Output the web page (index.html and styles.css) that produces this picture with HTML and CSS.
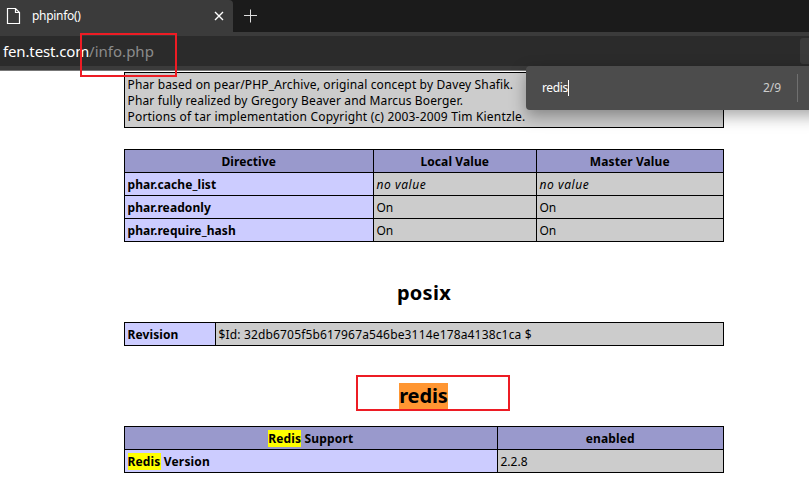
FILE: index.html
```
<!DOCTYPE html>
<html lang="en">
<head>
<meta charset="utf-8">
<title>phpinfo()</title>
<link rel="stylesheet" href="styles.css">
</head>
<body>
<header class="browser">
  <div class="tabs">
    <div class="tab">
      <svg class="page-icon" width="15" height="18" viewBox="0 0 15 18"><path d="M1.5 1.5H9.5L13.5 5.5V16.5H1.5Z M9.5 1.5V5.5H13.5"/></svg>
      <span class="tab-title">phpinfo()</span>
      <svg class="close" width="10" height="10" viewBox="0 0 10 10"><path d="M1 1L9 9M9 1L1 9"/></svg>
    </div>
    <div class="tab-rest"><svg width="14" height="14" viewBox="0 0 14 14"><path d="M6.5 .5V13.5M0 6.5H13"/></svg></div>
  </div>
  <div class="address"><span class="url"><span class="host">fen.test.com</span><span class="path">/info.php</span></span><span class="address-button"></span></div>
</header>
<main>
  <section class="box">
    <div>Phar based on pear/PHP_Archive, original concept by Davey Shafik.</div>
    <div>Phar fully realized by Gregory Beaver and Marcus Boerger.</div>
    <div class="wide">Portions of tar implementation Copyright (c) 2003-2009 Tim Kientzle.</div>
  </section>
  <section class="grid directives">
    <div class="h">Directive</div><div class="h">Local Value</div><div class="h">Master Value</div>
    <div class="e">phar.cache_list</div><div class="v"><i>no value</i></div><div class="v"><i>no value</i></div>
    <div class="e">phar.readonly</div><div class="v">On</div><div class="v">On</div>
    <div class="e">phar.require_hash</div><div class="v">On</div><div class="v">On</div>
  </section>
  <h2 class="posix">posix</h2>
  <section class="grid revision">
    <div class="e">Revision</div><div class="v"><span class="hash">$Id: 32db6705f5b617967a546be3114e178a4138c1ca $</span></div>
  </section>
  <h2 class="redis"><mark>redis</mark></h2>
  <section class="grid support">
    <div class="h"><span><mark>Redis</mark> Support</span></div><div class="h">enabled</div>
    <div class="e"><span><mark>Redis</mark> Version</span></div><div class="v">2.2.8</div>
  </section>
</main>
<div class="find"><span class="query">redis</span><span class="caret"></span><span class="count">2/9</span><span class="divider"></span></div>
<div class="outline outline-url"></div>
<div class="outline outline-heading"></div>
</body>
</html>
```
FILE: styles.css
```
* { box-sizing: border-box; }
body {
  margin: 0; width: 809px; height: 484px; overflow: hidden; position: relative;
  background: #fff; color: #000;
  font: 12px/16px "Noto Sans", "Open Sans", sans-serif;
  white-space: nowrap;
}
svg { fill: none; stroke: #fff; display: block; }
.browser { height: 71px; background: #3b3b3b; border-bottom: 1px solid #777; }
.tabs { display: flex; height: 32px; background: #1b1b1b; }
.tab { width: 233px; display: flex; align-items: center; padding-left: 6px; color: #fff; background: #3b3b3b; border-top-right-radius: 4px; }
.page-icon { stroke-width: 1.2; }
.tab-title { margin-left: 11px; width: 181.5px; letter-spacing: -.3px; }
.close { stroke-width: 1.4; flex: none; }
.tab-rest { flex: 1; background: #1b1b1b; border-bottom-left-radius: 4px; padding: 9px 0 0 11px; }
.tab-rest svg { stroke: #ddd; }
.address { height: 30px; margin-top: 4px; background: #2b2b2b; display: flex; justify-content: space-between; align-items: center; padding-left: 3px; color: #fff; font-size: 15px; line-height: 30px; }
.host { letter-spacing: -.14px; }
.path { color: #8b8b8b; letter-spacing: .02px; }
.address-button { width: 9px; height: 26px; background: #3b3b3b; border-radius: 3px 0 0 3px; }
main { width: 600px; margin: 1px 0 0 124px; }
.box { height: 56px; border: 1px solid #000; background: #ccc; padding: 4px 2.5px; letter-spacing: .14px; }
.wide { letter-spacing: .18px; }
.grid { display: grid; gap: 1px; grid-auto-rows: 22px; padding: 1px; background: #000; }
.grid > div { padding: 2px 3px 0 2.5px; display: flex; align-items: center; }
.directives { margin-top: 21px; grid-template-columns: 248px 162px 186px; }
.revision { grid-template-columns: 90px 507px; }
.support { grid-template-columns: 372px 225px; }
.grid > .h { background: #9999cc; font-weight: 700; justify-content: center; letter-spacing: .1px; }
.e { background: #ccccff; font-weight: 700; letter-spacing: .1px; }
.support .h span, .support .e span { letter-spacing: .16px; }
.v { background: #ccc; }
.v i { letter-spacing: .55px; }
.hash { letter-spacing: .16px; }
h2 { margin: 0; text-align: center; font-size: 20px; line-height: 26px; font-weight: 700; }
.posix { padding-top: 38px; height: 80px; letter-spacing: .3px; }
.redis { padding: 37px 1px 0 0; height: 80px; }
mark { background: #ff0; color: #000; }
h2 mark { background: #ff9632; display: inline-block; height: 26px; width: 49px; letter-spacing: -.1px; }
.find { position: absolute; left: 526px; top: 66px; width: 300px; height: 44px; background: #4c4c4c; border-radius: 4px; color: #fff; display: flex; align-items: center; padding-left: 16px; box-shadow: 0 6px 16px rgba(0,0,0,.35); }
.query { letter-spacing: -.35px; }
.caret { width: 1px; height: 16px; background: #fff; }
.count { margin-left: auto; color: #ccc; width: 34px; }
.divider { width: 1px; height: 28px; background: #707070; margin-right: 28px; }
.outline { position: absolute; border: 2px solid #ed1c24; }
.outline-url { left: 80px; top: 33px; width: 97px; height: 44px; }
.outline-heading { left: 356px; top: 375px; width: 154px; height: 36px; }
```
